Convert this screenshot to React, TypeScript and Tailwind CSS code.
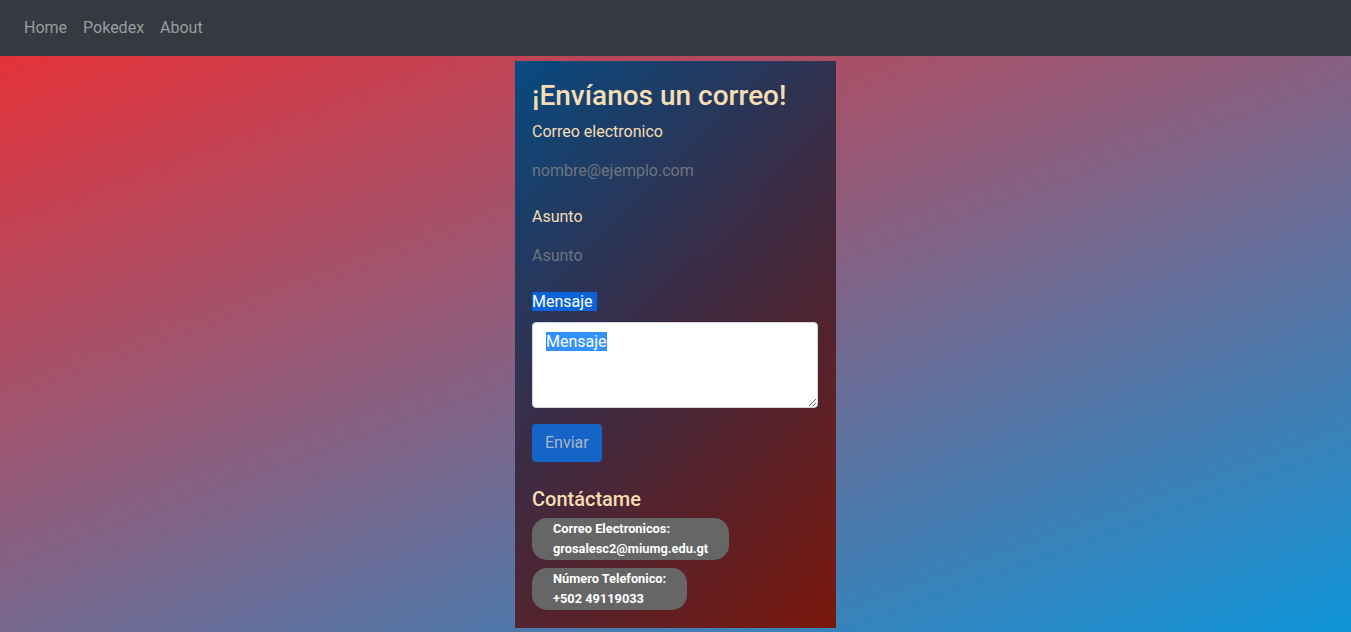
const contacts = [
  { label: "Correo Electronicos:", value: "grosalesc2@miumg.edu.gt" },
  { label: "Número Telefonico:", value: "+502 49119033" },
];

export default function App() {
  return (
    <div
      className="min-h-screen bg-[linear-gradient(160deg,#ee2d31_0%,#8a5f80_48%,#0e94d8_100%)] text-[16px]"
      style={{ fontFamily: "Roboto, 'Liberation Sans', sans-serif" }}
    >
      <nav className="h-14 bg-[#343a40] flex items-center px-4">
        <a href="#" className="px-2 text-[#9a9da0]">Home</a>
        <a href="#" className="px-2 text-[#9a9da0]">Pokedex</a>
        <a href="#" className="px-2 text-[#9a9da0]">About</a>
      </nav>

      <div className="mx-auto mt-[5px] w-[321px] bg-[linear-gradient(135deg,#074a81_0%,#3b2c45_45%,#7a160b_100%)] px-[17px] pt-[18px] pb-[18px]">
        <h2 className="text-[28px] leading-[1.2] font-medium text-[#f5deb3] mb-[7px]">
          ¡Envíanos un correo!
        </h2>

        <label className="block leading-6 text-[#f5deb3] mb-2">Correo electronico</label>
        <input
          type="email"
          placeholder="nombre@ejemplo.com"
          className="block w-full h-[38px] bg-transparent outline-none placeholder:text-[#6c757d] mb-[15px]"
        />

        <label className="block leading-6 text-[#f5deb3] mb-2">Asunto</label>
        <input
          type="text"
          placeholder="Asunto"
          className="block w-full h-[38px] bg-transparent outline-none placeholder:text-[#6c757d] mb-[15px]"
        />

        <label className="block leading-6 mb-2">
          <span className="bg-[#0b63d9] text-white pr-[4px]">Mensaje</span>
        </label>
        <div className="h-[86px] w-[286px] bg-white rounded border border-[#ced4da] px-[13px] pt-[7px] resize-y overflow-auto mb-4">
          <span className="bg-[#3390ff] text-white leading-[19px] inline-block">Mensaje</span>
        </div>

        <button className="h-[38px] px-[13px] rounded bg-[#1565c8] text-[#a9b4c6]">
          Enviar
        </button>

        <h4 className="mt-[25px] text-[20px] leading-6 font-medium text-[#f5deb3] mb-[7px]">
          Contáctame
        </h4>

        <div className="flex flex-col items-start gap-2">
          {contacts.map((c) => (
            <div
              key={c.label}
              className="bg-[#666666] rounded-[15px] pl-[21px] pr-[21px] py-[1px] text-[12.8px] leading-[20px] font-bold text-white"
            >
              <div>{c.label}</div>
              <div>{c.value}</div>
            </div>
          ))}
        </div>
      </div>
    </div>
  );
}
